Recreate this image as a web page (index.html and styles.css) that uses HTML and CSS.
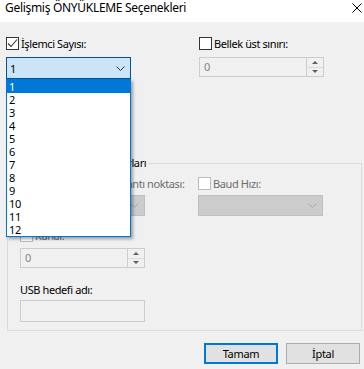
FILE: index.html
```html
<!DOCTYPE html>
<html lang="tr">
<head>
    <meta charset="UTF-8">
    <meta name="viewport" content="width=device-width, initial-scale=1.0">
    <title>Gelişmiş ÖNYÜKLEME Seçenekleri</title>
    <link rel="stylesheet" href="styles.css">
</head>
<body>
    <!-- Pencere -->
    <div class="window">
        <!-- Başlık çubuğu -->
        <div class="titlebar">
            <span class="title">Gelişmiş ÖNYÜKLEME Seçenekleri</span>
            <svg class="close" width="10" height="10" viewBox="0 0 10 10">
                <path d="M0.5 0.5 L9.5 9.5 M9.5 0.5 L0.5 9.5" stroke="#000" stroke-width="1" fill="none"/>
            </svg>
        </div>

        <div class="content">
            <!-- Üst seçenekler -->
            <div class="row top-row">
                <div class="col">
                    <label class="check">
                        <span class="box">
                            <svg width="11" height="11" viewBox="0 0 11 11">
                                <path d="M1 5.5 L4 8.5 L10 1.5" stroke="#333" stroke-width="1.1" fill="none"/>
                            </svg>
                        </span>
                        <span>İşlemci Sayısı:</span>
                    </label>
                    <div class="combo active">
                        <span>1</span>
                        <svg class="chev" width="9" height="5" viewBox="0 0 9 5">
                            <path d="M0.5 0.5 L4.5 4.5 L8.5 0.5" stroke="#333" fill="none"/>
                        </svg>
                    </div>

                    <!-- Açık liste -->
                    <ul class="dropdown">
                        <li class="selected">1</li>
                        <li>2</li>
                        <li>3</li>
                        <li>4</li>
                        <li>5</li>
                        <li>6</li>
                        <li>7</li>
                        <li>8</li>
                        <li>9</li>
                        <li>10</li>
                        <li>11</li>
                        <li>12</li>
                    </ul>
                </div>
                <div class="col">
                    <label class="check">
                        <span class="box"></span>
                        <span>Bellek üst sınırı:</span>
                    </label>
                    <div class="spin">
                        <span class="val">0</span>
                        <div class="spin-btns">
                            <span class="up"></span>
                            <span class="down"></span>
                        </div>
                    </div>
                </div>
            </div>

            <!-- Hata ayıklama ayarları -->
            <fieldset class="group">
                <legend>Hata ayıklama ayarları</legend>
                <div class="row group-row">
                    <div class="col">
                        <label class="check disabled">
                            <span class="box"></span>
                            <span>Hata ayıklama bağlantı noktası:</span>
                        </label>
                        <div class="combo off">
                            <svg class="chev" width="9" height="5" viewBox="0 0 9 5">
                                <path d="M0.5 0.5 L4.5 4.5 L8.5 0.5" stroke="#a6a6a6" fill="none"/>
                            </svg>
                        </div>
                        <label class="check disabled kanal">
                            <span class="box"></span>
                            <span>Kanal:</span>
                        </label>
                        <div class="spin small">
                            <span class="val">0</span>
                            <div class="spin-btns">
                                <span class="up"></span>
                                <span class="down"></span>
                            </div>
                        </div>
                        <div class="usb-label">USB hedefi adı:</div>
                        <div class="textbox"></div>
                    </div>
                    <div class="col">
                        <label class="check disabled">
                            <span class="box"></span>
                            <span>Baud Hızı:</span>
                        </label>
                        <div class="combo off">
                            <svg class="chev" width="9" height="5" viewBox="0 0 9 5">
                                <path d="M0.5 0.5 L4.5 4.5 L8.5 0.5" stroke="#a6a6a6" fill="none"/>
                            </svg>
                        </div>
                    </div>
                </div>
            </fieldset>

            <!-- Düğmeler -->
            <div class="buttons">
                <button class="default">Tamam</button>
                <button>İptal</button>
            </div>
        </div>
    </div>
</body>
</html>
```

FILE: styles.css
```css
/* Genel */
body {
    margin: 0;
    padding: 0;
    font-family: "Noto Sans", "DejaVu Sans", sans-serif;
    font-size: 11px;
    letter-spacing: -0.4px;
    color: #000;
    background: #f0f0f0;
}

.window {
    width: 364px;
    height: 369px;
    overflow: hidden;
    background: #f0f0f0;
}

/* Başlık çubuğu */
.titlebar {
    height: 22px;
    background: #fff;
    display: flex;
    justify-content: space-between;
    align-items: flex-start;
    padding-left: 5px;
    padding-right: 2px;
}

.title {
    font-size: 12px;
    letter-spacing: -0.3px;
    line-height: 16px;
}

.close {
    margin-top: 3px;
}

/* İçerik */
.content {
    padding: 0 0 0 6px;
}

.row {
    display: flex;
    align-items: flex-start;
}

.top-row {
    gap: 68px;
    padding-top: 15px;
}

.group-row {
    gap: 53px;
}

.col {
    position: relative;
    width: 125px;
    flex-shrink: 0;
    display: flex;
    flex-direction: column;
}

/* Onay kutusu */
.check {
    display: flex;
    align-items: center;
    gap: 2px;
    height: 13px;
    line-height: 13px;
    white-space: nowrap;
}

.box {
    width: 11px;
    height: 11px;
    border: 1px solid #333;
    background: #fff;
    display: flex;
    align-items: center;
    justify-content: center;
    flex-shrink: 0;
}

.check.disabled {
    color: #6d6d6d;
}

.check.disabled .box {
    border-color: #bcbcbc;
}

/* Açılır kutu */
.combo {
    height: 20px;
    margin-top: 7px;
    display: flex;
    align-items: center;
    justify-content: space-between;
    padding: 0 5px 0 3px;
}

.combo.active {
    background: #cce4f7;
    border: 1px solid #005499;
}

.combo.off {
    background: #cccccc;
    border: 1px solid #bfbfbf;
    margin-top: 5px;
    justify-content: flex-end;
    height: 19px;
}

/* Açık liste */
.dropdown {
    position: absolute;
    top: 42px;
    left: 0;
    width: 123px;
    margin: 0;
    padding: 0;
    list-style: none;
    background: #fff;
    border: 1px solid #0078d7;
    box-shadow: 2px 2px 3px rgba(0, 0, 0, 0.35);
    z-index: 5;
}

.dropdown li {
    height: 13px;
    line-height: 13px;
    padding-left: 2px;
}

.dropdown li.selected {
    background: #0078d7;
    color: #fff;
}

/* Sayı kutusu */
.spin {
    height: 18px;
    margin-top: 7px;
    border: 1px solid #cccccc;
    background: #f0f0f0;
    display: flex;
    justify-content: space-between;
}

.spin .val {
    color: #838383;
    line-height: 18px;
    padding-left: 4px;
}

.spin-btns {
    width: 16px;
    display: flex;
    flex-direction: column;
    border-left: 1px solid #cccccc;
}

.spin-btns span {
    flex: 1;
    display: flex;
    align-items: center;
    justify-content: center;
    background: #f0f0f0;
}

.spin-btns .up {
    border-bottom: 1px solid #dcdcdc;
}

.spin-btns .up::after {
    content: "";
    border-left: 3px solid transparent;
    border-right: 3px solid transparent;
    border-bottom: 3px solid #606060;
}

.spin-btns .down::after {
    content: "";
    border-left: 3px solid transparent;
    border-right: 3px solid transparent;
    border-top: 3px solid #606060;
}

/* Grup kutusu */
.group {
    margin: 77px 2px 0 1px;
    padding: 7px 12px 8px 12px;
    border: 1px solid #dcdcdc;
    min-width: 0;
}

.group legend {
    padding: 0 2px;
    margin-left: 18px;
    line-height: 14px;
}

.check.kanal {
    margin-top: 13px;
}

.spin.small {
    margin-top: 6px;
}

.usb-label {
    margin-top: 14px;
    line-height: 16px;
}

.textbox {
    height: 20px;
    margin-top: 2px;
    border: 1px solid #cccccc;
    background: #f0f0f0;
}

/* Düğmeler */
.buttons {
    display: flex;
    justify-content: flex-end;
    gap: 8px;
    margin-top: 12px;
    padding-right: 4px;
}

button {
    width: 74px;
    height: 21px;
    padding: 0;
    font-family: inherit;
    font-size: 11px;
    letter-spacing: -0.3px;
    background: #e1e1e1;
    border: 1px solid #adadad;
    color: #000;
}

button.default {
    border: 2px solid #0078d7;
}
```
